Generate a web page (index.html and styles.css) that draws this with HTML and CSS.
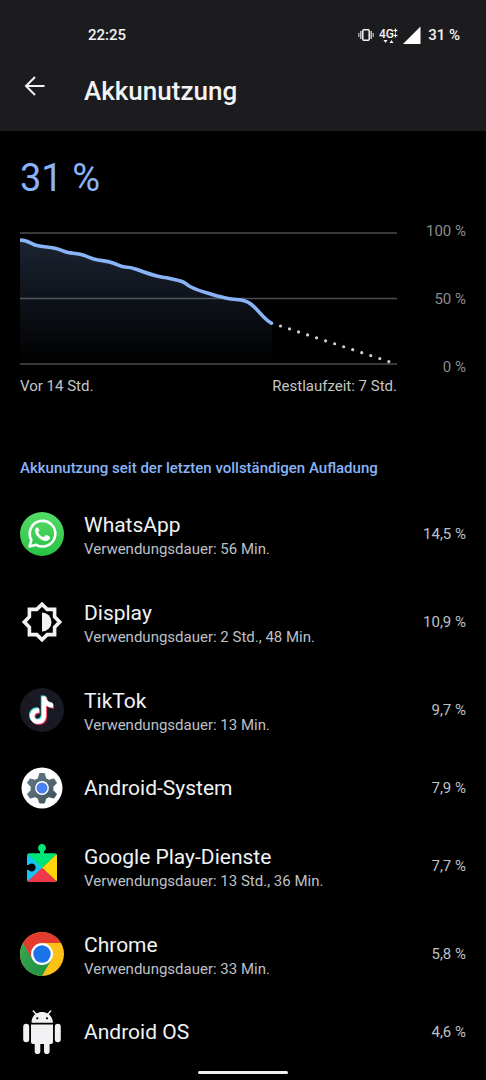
FILE: index.html
```html
<!DOCTYPE html>
<html lang="de">
<head>
<meta charset="utf-8">
<meta name="viewport" content="width=device-width, initial-scale=1">
<title>Akkunutzung</title>
<link rel="stylesheet" href="styles.css">
</head>
<body>
<header class="top">
  <div class="status">
    <span class="clock">22:25</span>
    <div class="status-icons">
      <svg class="vibrate" width="16" height="14" viewBox="0 0 16 14" aria-hidden="true"><rect x="4.8" y="1.8" width="6.4" height="10.4" rx="1" fill="none" stroke="#f1f3f4" stroke-width="1.5"/><path d="M2.8 3v8M13.2 3v8" stroke="#c4c6c8" stroke-width="1.5"/><path d="M.8 5v4M15.2 5v4" stroke="#a9abad" stroke-width="1.4"/></svg>
      <svg class="network" width="19" height="17" viewBox="0 0 19 17" aria-label="4G+"><text class="network-text" x="0" y="11">4G</text><path d="M14.5 3.5h4M16.5 1.5v4M14.5 8.5h4M16.5 6.5v4" stroke="#f1f3f4" stroke-width="1.2"/><path d="M4.5 13h4l-2 3zM10.5 16h4l-2-3z" fill="#f1f3f4"/></svg>
      <svg class="signal" width="18" height="18" viewBox="0 0 18 18" aria-hidden="true"><path d="M0 18 17.500 .5V18z" fill="#fff"/></svg>
      <span>31 %</span>
    </div>
  </div>
  <div class="toolbar">
    <button class="back" type="button" aria-label="Zurück"><svg width="22" height="22" viewBox="0 0 22 22" aria-hidden="true"><path d="M20.500 11H2.500M11 2 2 11l9 9" fill="none" stroke="#f1f3f4" stroke-width="2"/></svg></button>
    <h1>Akkunutzung</h1>
  </div>
</header>
<main>
  <p class="level">31 %</p>
  <section class="chart">
    <div class="plot">
      <svg class="graph" viewBox="0 0 377 136" aria-label="Akkuverlauf">
        <defs><linearGradient id="fill" x1="0" y1="0" x2="0" y2="1"><stop offset="0" stop-color="#8ab4f8" stop-opacity=".2"/><stop offset="1" stop-color="#8ab4f8" stop-opacity="0"/></linearGradient></defs>
        <path d="M0 3H377M0 68.500H377M0 134H377" stroke="#4c4c4c" stroke-width="1.400"/>
        <path d="M0 10C8 10 11 14 17 15.500S30 17 36 18.500 43 21.500 48 22.500 57 23 63 25 72 29 78 30 87 31 93 33 101 37 105 37 113 38 117 39.500 129 44 137 46 144 47 148 48 158 50 162 51.500 167 55 171 57 182 61.500 189 63.500 201 67 208 68.500 219 69 225 71C236 74 241 88 252 93.500V134H0z" fill="url(#fill)"/>
        <path d="M0 10C8 10 11 14 17 15.500S30 17 36 18.500 43 21.500 48 22.500 57 23 63 25 72 29 78 30 87 31 93 33 101 37 105 37 113 38 117 39.500 129 44 137 46 144 47 148 48 158 50 162 51.500 167 55 171 57 182 61.500 189 63.500 201 67 208 68.500 219 69 225 71C236 74 241 88 252 93.500" fill="none" stroke="#8ab4f8" stroke-width="3.600"/>
        <circle cx="251.500" cy="93.200" r="1.800" fill="#8ab4f8"/>
        <path d="M260.500 96 369 131.600" stroke="#d0d0d0" stroke-width="3.200" stroke-linecap="round" stroke-dasharray="0 9.500"/>
      </svg>
      <div class="times"><span>Vor 14 Std.</span><span>Restlaufzeit: 7 Std.</span></div>
    </div>
    <div class="axis"><span>100 %</span><span>50 %</span><span>0 %</span></div>
  </section>
  <h2>Akkunutzung seit der letzten vollständigen Aufladung</h2>
  <ul class="apps">
    <li class="app">
      <svg class="icon" viewBox="0 0 44 44" aria-hidden="true"><defs><linearGradient id="wa" x1="0" y1="0" x2="0" y2="1"><stop offset="0" stop-color="#56db68"/><stop offset="1" stop-color="#27c244"/></linearGradient></defs><circle cx="22" cy="22" r="22" fill="url(#wa)"/><path d="M9.500 34.500 11.400 28A12.800 12.800 0 1 1 16.200 32.800z" fill="none" stroke="#fff" stroke-width="2.600" stroke-linejoin="round"/><path d="M17.500 15.200c-.8-.2-2.700 1.300-2.500 3.700.4 5 6.400 9.800 10.500 10 2.500.1 4.700-1.700 4.500-3.700-.1-.8-3.500-2.400-4.200-2.300-.8.100-1.600 2.300-2.300 2.200-2.200-.3-4.700-3-5.300-4.800-.2-.7 1.400-1.500 1.300-2.300z" fill="#fff"/></svg>
      <div class="info"><h3>WhatsApp</h3><p>Verwendungsdauer: 56 Min.</p></div><span class="share">14,5 %</span>
    </li>
    <li class="app">
      <svg class="icon" viewBox="0 0 44 44" aria-hidden="true"><path d="M22 4.300 27.200 9.400H34.600V16.800L39.700 22 34.600 27.200V34.600H27.200L22 39.700 16.800 34.600H9.400V27.200L4.300 22 9.400 16.800V9.400H16.800z" fill="none" stroke="#f1f3f4" stroke-width="3.600"/><path d="M22 12.500a9.500 9.500 0 0 1 0 19z" fill="#f1f3f4"/></svg>
      <div class="info"><h3>Display</h3><p>Verwendungsdauer: 2 Std., 48 Min.</p></div><span class="share">10,9 %</span>
    </li>
    <li class="app">
      <svg class="icon" viewBox="0 0 44 44" aria-hidden="true"><defs><path id="note" d="M21.800 8.500H26.200C26.500 12.500 29 14.800 33 15.200V19.800C30.500 19.800 28.200 19 26.200 17.600V27.500C26.200 32.500 22.500 36 18 36S10 32.500 10 28C10 23.200 14 19.700 19.200 20.200V24.800C16.500 24.200 14.600 25.800 14.600 28S16.200 31.500 18.100 31.500C20.500 31.500 21.800 29.800 21.800 27.500z"/></defs><circle cx="22" cy="22" r="22" fill="#181922"/><use href="#note" x="-1" y="-1" fill="#3de4dc"/><use href="#note" x="1" y="1" fill="#ef3054"/><use href="#note" fill="#fff"/></svg>
      <div class="info"><h3>TikTok</h3><p>Verwendungsdauer: 13 Min.</p></div><span class="share">9,7 %</span>
    </li>
    <li class="app single">
      <svg class="icon" viewBox="0 0 44 44" aria-hidden="true"><defs><linearGradient id="gear" x1="0" y1="0" x2="1" y2="1"><stop offset="0" stop-color="#607985"/><stop offset=".5" stop-color="#536872"/><stop offset="1" stop-color="#384c54"/></linearGradient></defs><circle cx="22" cy="22" r="20.500" fill="#fff"/><path d="M19.600 7.500h4.800l1.300 5 3.200 1.800 5-1.400 2.600 4-3.600 3.800v3.600l3.600 3.800-2.600 4-5-1.400-3.200 1.800-1.300 4.500h-4.800l-1.300-4.500-3.200-1.800-5 1.400-2.600-4 3.600-3.800v-3.600l-3.600-3.800 2.600-4 5 1.400 3.200-1.800z" fill="url(#gear)" stroke="url(#gear)" stroke-linejoin="round"/><circle cx="22" cy="22" r="6.200" fill="#4a80f0" stroke="#fff" stroke-width="1.400"/></svg>
      <div class="info"><h3>Android-System</h3></div><span class="share">7,9 %</span>
    </li>
    <li class="app">
      <svg class="icon" viewBox="0 0 44 44" aria-hidden="true"><defs><clipPath id="piece"><path d="M9 9.500H20V7.500a4 4 0 1 1 4 0V9.500H35a2 2 0 0 1 2 2V36a2 2 0 0 1-2 2H9a2 2 0 0 1-2-2V26h1.500a4 4 0 1 0 0-5H7V11.500a2 2 0 0 1 2-2z"/></clipPath></defs><g clip-path="url(#piece)"><path d="M0 0H44V3L22 23.500 7 9z" fill="#00e676"/><path d="M6 8.500 24 23.700 6 39z" fill="#14c4f4"/><path d="M38 8.500 22 23.700 38 39z" fill="#ffd20a"/><path d="M6 39 22 23.700 38 39z" fill="#f0384b"/><path d="M6 8.500 22 23.700 38 8.500z" fill="#00e676"/></g></svg>
      <div class="info"><h3>Google Play-Dienste</h3><p>Verwendungsdauer: 13 Std., 36 Min.</p></div><span class="share">7,7 %</span>
    </li>
    <li class="app">
      <svg class="icon" viewBox="0 0 44 44" aria-hidden="true"><defs><linearGradient id="cg" x1="0" y1="0" x2="1" y2="1"><stop offset="0" stop-color="#35a853"/><stop offset="1" stop-color="#1e8e3e"/></linearGradient></defs><circle cx="22" cy="22" r="22" fill="#fcc116"/><path d="M3 11A22 22 0 0 0 22 44L31.500 27.500 22 22z" fill="url(#cg)"/><path d="M3 11A22 22 0 0 1 41 11H22V22L12.500 27.500z" fill="#e33b2e"/><circle cx="22" cy="22" r="11" fill="#fff"/><circle cx="22" cy="22" r="8.700" fill="#1a73e8"/></svg>
      <div class="info"><h3>Chrome</h3><p>Verwendungsdauer: 33 Min.</p></div><span class="share">5,8 %</span>
    </li>
    <li class="app single">
      <svg class="icon" viewBox="0 0 44 44" aria-hidden="true"><g fill="#f1f1f4"><path d="M11.500 12.700C11.500 6 16 2 22 2S32.500 6 33 12.700z"/><path d="M11 14.500H33V32a2 2 0 0 1-2 2H13a2 2 0 0 1-2-2z"/><rect x="3.200" y="13.800" width="6" height="18.500" rx="3"/><rect x="34.800" y="13.800" width="6" height="18.500" rx="3"/><rect x="14.700" y="30" width="5.600" height="14" rx="2.800"/><rect x="24" y="30" width="5.600" height="14" rx="2.800"/></g><path d="M16 4 13.300 1M28 4 30.700 1" stroke="#f1f1f4" stroke-width="1.500" stroke-linecap="round"/><circle cx="17.300" cy="8.300" r="1.100"/><circle cx="27" cy="8.300" r="1.100"/></svg>
      <div class="info"><h3>Android OS</h3></div><span class="share">4,6 %</span>
    </li>
  </ul>
</main>
<div class="handle"></div>
</body>
</html>
```
FILE: styles.css
```css
* { box-sizing: border-box; margin: 0; padding: 0; }
body {
  min-height: 100vh;
  background: #000;
  color: #f1f3f4;
  font-family: Roboto, "Liberation Sans", sans-serif;
}
.top { background: #1c1c1e; padding-bottom: 24px; }
.status {
  display: flex;
  align-items: center;
  justify-content: space-between;
  padding: 24px 26px 0 88px;
  font-size: 15px;
  font-weight: 500;
  line-height: 22px;
}
.status-icons { display: flex; align-items: center; gap: 5px; }
.status-icons span { padding-left: 2px; }
.network-text { font-size: 12px; font-weight: 500; fill: #f1f3f4; }
.toolbar { display: flex; align-items: flex-start; gap: 38px; padding: 29px 24px 0; }
.back { width: 22px; height: 22px; border: 0; background: none; }
.back svg { display: block; }
h1 { font-size: 26px; font-weight: 500; line-height: 32px; }
main { padding: 24px 20px 0; }
.level { color: #8ab4f8; font-size: 38px; line-height: 46px; }
.chart { display: flex; gap: 20px; margin-top: 29px; }
.plot { flex: 1; }
.graph { display: block; width: 100%; }
.times {
  display: flex;
  justify-content: space-between;
  margin-top: 10px;
  color: #c4c6c8;
  font-size: 15px;
  line-height: 20px;
}
.axis {
  display: flex;
  flex-direction: column;
  gap: 48px;
  width: 49px;
  margin-top: -9px;
  color: #8b8b8b;
  font-size: 15px;
  line-height: 20px;
  text-align: right;
}
h2 {
  margin-top: 62px;
  color: #8ab4f8;
  font-size: 15px;
  font-weight: 500;
  line-height: 20px;
}
.apps { margin-top: 12px; list-style: none; }
.app { display: flex; align-items: center; gap: 20px; height: 88px; }
.icon { flex: none; width: 44px; height: 44px; }
.info { flex: 1; padding-top: 2px; }
.single { height: 68px; }
.single .info { padding-top: 0; }
h3 { font-size: 21px; font-weight: 400; line-height: 28px; }
.info p { color: #bdc1c6; font-size: 15px; line-height: 20px; }
.share { color: #bdc1c6; font-size: 15px; line-height: 20px; }
.handle {
  position: fixed;
  bottom: 6px;
  left: 50%;
  width: 90px;
  height: 3px;
  margin-left: -45px;
  border-radius: 2px;
  background: #f1f1f1;
}
```
